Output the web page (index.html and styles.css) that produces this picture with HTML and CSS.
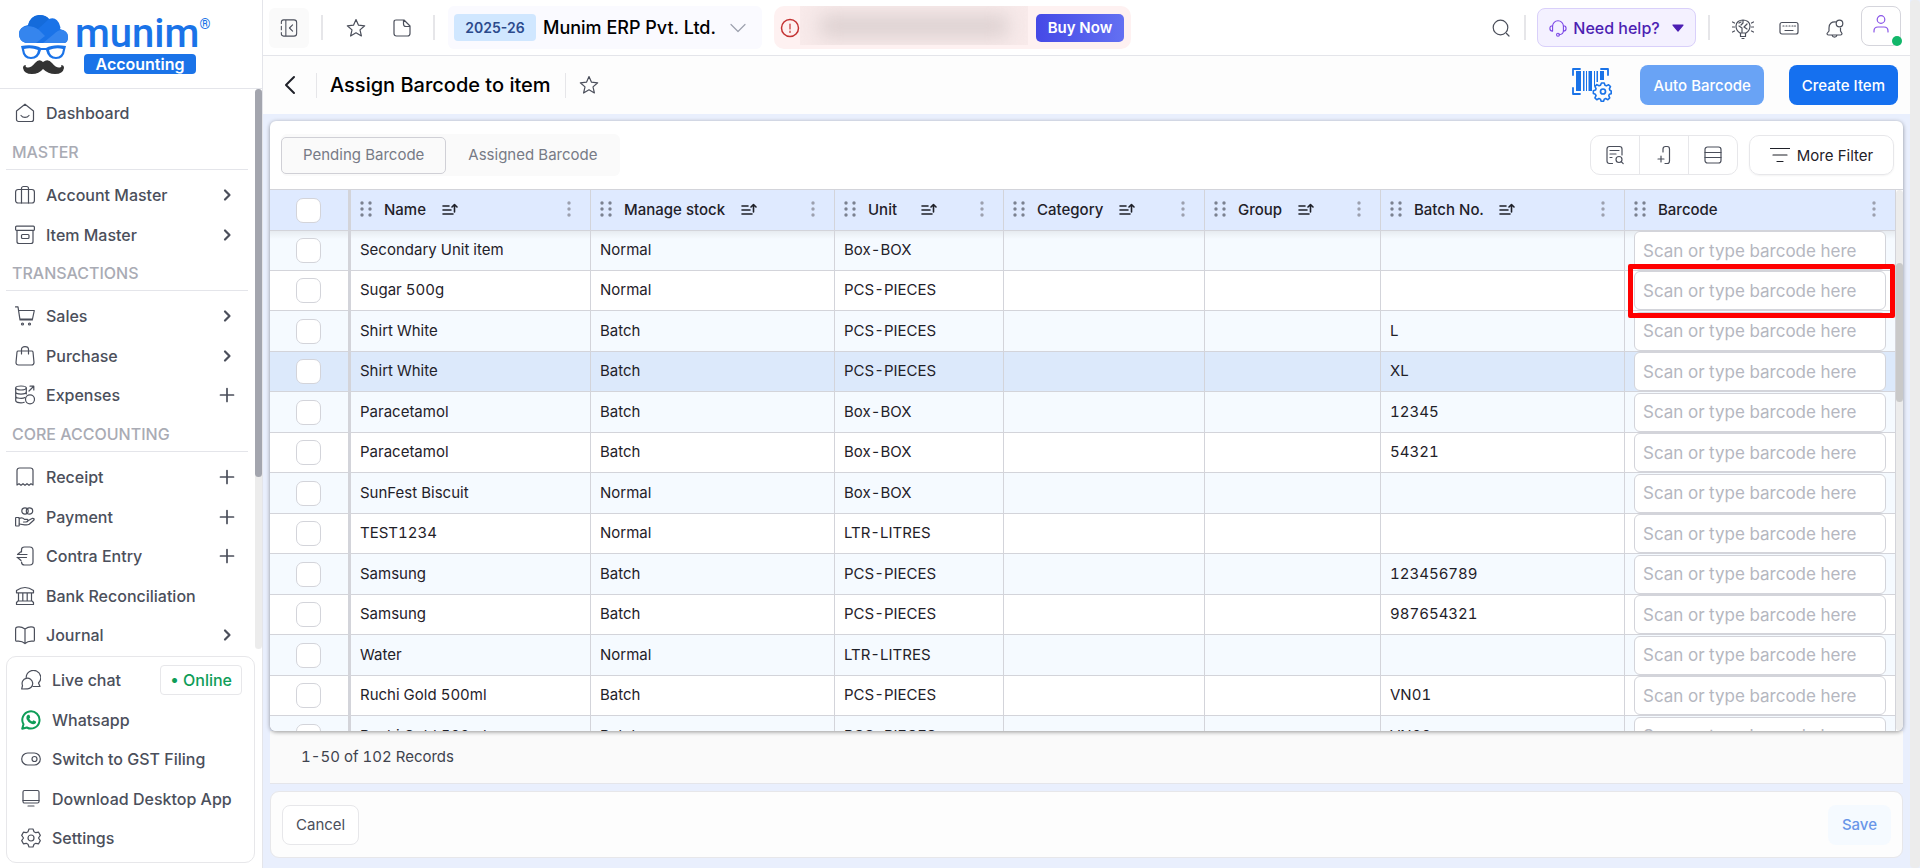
FILE: index.html
```html
<!DOCTYPE html>
<html lang="en">
<head>
    <meta charset="UTF-8">
    <meta name="viewport" content="width=device-width, initial-scale=1.0">
    <title>Assign Barcode to item</title>
    <link rel="stylesheet" href="styles.css">
</head>
<body>
    <!-- shared icons -->
    <svg class="sprite" aria-hidden="true">
        <symbol id="i-chevron" viewBox="0 0 20 20"><path d="M8 5.500l4.500 4.500L8 14.500" stroke-width="2.200"/></symbol>
        <symbol id="i-plus" viewBox="0 0 20 20"><path d="M10 3.500v13M3.500 10h13" stroke-width="1.700"/></symbol>
        <symbol id="i-star" viewBox="0 0 20 20"><path d="M10 1.500l2.500 5.700 6.200.6-4.700 4.100 1.400 6.100L10 14.800 4.600 18 6 11.900 1.300 7.800l6.200-.6z"/></symbol>
        <symbol id="i-drag" viewBox="0 0 12 16"><g fill="#7b8190" stroke="none"><circle cx="2" cy="2" r="1.700"/><circle cx="10" cy="2" r="1.700"/><circle cx="2" cy="8" r="1.700"/><circle cx="10" cy="8" r="1.700"/><circle cx="2" cy="14" r="1.700"/><circle cx="10" cy="14" r="1.700"/></g></symbol>
        <symbol id="i-sort" viewBox="0 0 16 14"><path d="M1 4h6M1 8h8M1 12h10" stroke-width="1.600"/><path d="M12.500 10V3M10 5l2.500-2.500L15 5" stroke-width="1.600"/></symbol>
        <symbol id="i-dots" viewBox="0 0 4 16"><g fill="#9ca0ae" stroke="none"><circle cx="2" cy="2" r="1.700"/><circle cx="2" cy="8" r="1.700"/><circle cx="2" cy="14" r="1.700"/></g></symbol>
    </svg>

    <aside class="sidebar">
        <a class="logo" href="#" aria-label="munim Accounting">
            <svg class="logo-mark" width="52" height="60" viewBox="0 0 52 60">
                <path d="M8 28Q1 26 1 19q0-7 9-9Q12 1 21 0q7 0 10 4 8-3 11 7 1 2 0 3 8 2 8 8t-4 6z" fill="#1a73e8"/>
                <path d="M8 28Q1 26 1 19q0-7 9-8 6 0 11 4l6 6-9 7z" fill="#3585ee"/>
                <path d="M25 28l11-9q6-6 11-3 3 2 3 6 0 4-4 6z" fill="#3585ee"/>
                <path d="M10 11Q12 1 21 0q7 0 10 4L20 14q-4-3-10-3z" fill="#146bdb"/>
                <path d="M3 31q13-2 20 2h5q7-4 20-2l-1 4q-1 9-9 9-8 0-10-9h-5q-2 9-10 9-8 0-9-9z" fill="#1a73e8"/>
                <path d="M6 34q7-2 14 1-1 7-7 7-6 0-7-8zM45 34q-7-2-14 1 1 7 7 7 6 0 7-8z" fill="#fff"/>
                <path d="M25 47q-4-4-8 1-5 6-9 4-1-1 0-2-3 0-3 3 1 6 9 6 7 0 11-5 5 5 12 5 8 0 9-6 0-3-3-3 1 1 0 2-4 2-9-4-4-5-9-1z" fill="#333"/>
            </svg>
            <span class="logo-text">
                <span class="logo-name">munim<sup>®</sup></span>
                <span class="logo-product">Accounting</span>
            </span>
        </a>

        <div class="menu-scroll">
            <nav class="menu">
                <ul>
                    <li><a href="#">
                        <svg class="icon" viewBox="0 0 20 20"><path d="M1.500 8L10 1.200 18.500 8v8.500a2 2 0 0 1-2 2h-13a2 2 0 0 1-2-2zM6 12.500c2 2.600 6 2.600 8 0"/></svg>
                        <span>Dashboard</span></a></li>
                </ul>
                <h2>MASTER</h2>
                <ul>
                    <li><a href="#">
                        <svg class="icon" viewBox="0 0 20 20"><rect x=".600" y="4.500" width="18.800" height="13.500" rx="2.500"/><path d="M6.500 18V3.500a2 2 0 0 1 2-2h3a2 2 0 0 1 2 2V18"/></svg>
                        <span>Account Master</span><svg class="arrow"><use href="#i-chevron"/></svg></a></li>
                    <li><a href="#">
                        <svg class="icon" viewBox="0 0 20 20"><rect x=".600" y="1.200" width="18.800" height="4.200" rx="1"/><path d="M2 5.500v11a2 2 0 0 0 2 2h12a2 2 0 0 0 2-2v-11"/><rect x="6.500" y="9.500" width="7.500" height="4" rx="1"/></svg>
                        <span>Item Master</span><svg class="arrow"><use href="#i-chevron"/></svg></a></li>
                </ul>
                <h2>TRANSACTIONS</h2>
                <ul>
                    <li><a href="#">
                        <svg class="icon" viewBox="0 0 20 20"><path d="M.500.800H3l2 13h12.500M3.500 4.500h15.800l-1.800 8.500H5"/><circle cx="7.500" cy="18" r="1"/><circle cx="14.500" cy="18" r="1"/></svg>
                        <span>Sales</span><svg class="arrow"><use href="#i-chevron"/></svg></a></li>
                    <li><a href="#">
                        <svg class="icon" viewBox="0 0 20 20"><path d="M3.200 5h13.600q1 0 1.200 1l1 10.500q0 2.500-2.500 2.500h-13Q1 19 1 16.500L2 6q.2-1 1.200-1zM6.500 8V3.500Q6.500.700 10 .700t3.500 2.800V8"/></svg>
                        <span>Purchase</span><svg class="arrow"><use href="#i-chevron"/></svg></a></li>
                    <li><a href="#">
                        <svg class="icon" viewBox="0 0 20 20"><ellipse cx="6" cy="3" rx="5.300" ry="2"/><path d="M.700 3v12.500c0 2.500 6 2.800 8.500 1.800M11.300 3v6M.700 7c0 2.700 10.600 2.700 10.600 0M.700 11.200c0 2.300 7 2.700 9.300 1.300"/><circle cx="15" cy="14.300" r="4.500"/><path d="M14 6l4.500-4.500M15 1.200h3.800V5"/></svg>
                        <span>Expenses</span><svg class="arrow"><use href="#i-plus"/></svg></a></li>
                </ul>
                <h2>CORE ACCOUNTING</h2>
                <ul>
                    <li><a href="#">
                        <svg class="icon" viewBox="0 0 20 20"><path d="M2 18V3.500a2.500 2.500 0 0 1 2.500-2.500h11A2.500 2.500 0 0 1 18 3.500V18l-2-1.300-2 1.600-2-1.600-2 1.600-2-1.600-2 1.600-2-1.600z"/></svg>
                        <span>Receipt</span><svg class="arrow"><use href="#i-plus"/></svg></a></li>
                    <li><a href="#">
                        <svg class="icon" viewBox="0 0 20 20"><circle cx="10" cy="4" r="3.200"/><circle cx="14.500" cy="4" r="3.200"/><rect x=".600" y="10.500" width="3.600" height="8.500" rx=".500"/><path d="M4.200 11.500q3-1.500 5.300.8h3q1.500 2.300-1.500 2.700H8.500M12.500 14l5-2.700q2.500.2 1.200 2l-4.500 4q-2 1-4.500.5l-5.500-.8"/></svg>
                        <span>Payment</span><svg class="arrow"><use href="#i-plus"/></svg></a></li>
                    <li><a href="#">
                        <svg class="icon" viewBox="0 0 20 20"><path d="M6.500 6V3.800Q6.500 1 9.500 1h5.300Q18 1 18 4.200v11.600q0 3.200-3.200 3.200H9.500q-3 0-3-3M12 8.500H2.500L5.500 6M2 11.500h9.500M2.500 11.500l3.500 3"/></svg>
                        <span>Contra Entry</span><svg class="arrow"><use href="#i-plus"/></svg></a></li>
                    <li><a href="#">
                        <svg class="icon" viewBox="0 0 20 20"><path d="M1.500 6.800V4.500Q10-1.500 18.500 4.500v2.300zM3.500 7v8M7.800 7v8M12.200 7v8M16.500 7v8M3 15h14l1.500 1.500v2h-17v-2z"/></svg>
                        <span>Bank Reconciliation</span></a></li>
                    <li><a href="#">
                        <svg class="icon" viewBox="0 0 20 20"><path d="M10 4Q6 1.300 2 2.200q-1.400.3-1.400 1.800v11q0 1.400 1.400 1.200 5-.5 8 2.300 3-2.800 8-2.300 1.400.2 1.400-1.200V4q0-1.500-1.400-1.800Q14 1.300 10 4v14.500"/></svg>
                        <span>Journal</span><svg class="arrow"><use href="#i-chevron"/></svg></a></li>
                </ul>
            </nav>
            <div class="scrollbar"><div class="thumb menu-thumb"></div></div>
        </div>

        <ul class="support">
            <li><a href="#">
                <svg class="icon" viewBox="0 0 20 20"><path d="M5.200 7.500A7.300 7.300 0 1 1 17.500 13l1.500 3.500h-7"/><path d="M.700 19l.8-3.500a5.300 5.300 0 1 1 4.500 3.300z"/></svg>
                <span>Live chat</span></a><span class="online">• Online</span></li>
            <li><a href="#">
                <svg class="icon" viewBox="0 0 20 20"><path d="M1.200 18.800l1.300-4.500a8.600 8.600 0 1 1 3.300 3.200z" stroke="#0f9d58" stroke-width="2"/><path d="M6.500 5q2-1 2.300 1l.4 1.500-1 1.300q1 2 3 2.800l1.300-1.300 2.400 1.100q.6.800-.5 2.200-2 1.400-4.600 0Q6.800 12 5.500 9q-.6-2.500 1-4z" fill="#0f9d58" stroke="none"/></svg>
                <span>Whatsapp</span></a></li>
            <li><a href="#">
                <svg class="icon" viewBox="0 0 20 20"><rect x=".700" y="4" width="18.600" height="12" rx="6"/><circle cx="13.500" cy="10" r="2.500"/></svg>
                <span>Switch to GST Filing</span></a></li>
            <li><a href="#">
                <svg class="icon" viewBox="0 0 20 20"><rect x="2" y="1.500" width="16" height="12.500" rx="1.500"/><path d="M2 11.500h16M7 17h6"/></svg>
                <span>Download Desktop App</span></a></li>
            <li><a href="#">
                <svg class="icon" viewBox="0 0 20 20"><path d="M8 1h4l1 2.700 1.800 1 2.800-.5 1.700 3.200L17.500 10l1.800 2.600-1.700 3.200-2.800-.5-1.800 1L12 19H8l-1-2.700-1.800-1-2.800.5L.700 12.600 2.500 10 .700 7.400l1.700-3.200 2.800.5 1.800-1z"/><circle cx="10" cy="10" r="3"/></svg>
                <span>Settings</span></a></li>
        </ul>
    </aside>

    <div class="page">
        <header class="topbar">
            <button class="icon-btn collapse" aria-label="Collapse menu">
                <svg width="18" height="18" viewBox="0 0 20 20"><path d="M6 1H4Q1.500 1 1.500 3.500V5M1.500 8v4M1.500 15v1.500Q1.500 19 4 19h2M6.500 1h9Q18.500 1 18.500 4v12q0 3-3 3h-9zM14 6.500L10.500 10l3.500 3.500"/></svg>
            </button>
            <span class="divider"></span>
            <button class="icon-btn" aria-label="Favourites"><svg width="20" height="20"><use href="#i-star"/></svg></button>
            <button class="icon-btn" aria-label="Documents"><svg width="20" height="20" viewBox="0 0 20 20"><path d="M4 2h8l6 6v7.500q0 2.500-2.500 2.500h-11Q2 18 2 15.500V4q0-2 2-2zM11.500 2v4q0 2.500 2.500 2.500h4"/></svg></button>
            <span class="divider company-divider"></span>
            <button class="company">
                <span class="year">2025-26</span>
                <span>Munim ERP Pvt. Ltd.</span>
                <svg width="16" height="16" viewBox="0 0 16 16"><path d="M1 4.500l7 7 7-7"/></svg>
            </button>
            <div class="notice">
                <svg width="20" height="20" viewBox="0 0 20 20"><circle cx="10" cy="10" r="8.500" stroke-width="1.500"/><path d="M10 6v5M10 13v1.500"/></svg>
                <span class="notice-text"></span>
                <button class="buy">Buy Now</button>
            </div>
            <span class="spacer"></span>
            <button class="icon-btn" aria-label="Search"><svg width="20" height="20" viewBox="0 0 20 20"><circle cx="9.500" cy="9.500" r="7.300"/><path d="M15.500 15.500L18 18"/></svg></button>
            <span class="divider"></span>
            <button class="help">
                <svg width="18" height="18" viewBox="0 0 20 20"><path d="M4 13V8a6 6 0 0 1 12 0v5q0 4-5 4.500M4 7.500q-3 0-3 3T4 13.500M16 7.500q3 0 3 3t-3 3"/><circle cx="10" cy="17.500" r="1.600"/></svg>
                <span>Need help?</span>
                <svg width="12" height="8" viewBox="0 0 12 8"><path d="M1 1h10L6 7z" fill="#4c1fb3" stroke="#4c1fb3"/></svg>
            </button>
            <span class="divider"></span>
            <button class="icon-btn" aria-label="Tips"><svg width="22" height="22" viewBox="0 0 22 22"><path d="M8 16c-3-2-4-4-4-7 0-8 14-8 14 0 0 3-1 5-4 7zM8.500 16v3.500h5V16M10 21.500h2M11 3v3l-2 2M7 9l3 2v4M15 7l-3 3 3 2M7 6l2-1M.500 5l2 1M.500 10h2M.500 15l2-1M21.500 5l-2 1M21.500 10h-2M21.500 15l-2-1"/></svg></button>
            <button class="icon-btn" aria-label="Shortcuts"><svg width="20" height="20" viewBox="0 0 20 20"><rect x="1" y="4.500" width="18" height="11.500" rx="2"/><path d="M4 8h1M7 8h1M10 8h1M13 8h1M15.500 8h1M6 12.500h8"/></svg></button>
            <button class="icon-btn" aria-label="Notifications"><svg width="20" height="20" viewBox="0 0 20 20"><path d="M11 4Q4 3.500 4 10v3l-2 2.500Q2 17 3.500 17h12q1.500 0 1.500-1.500L15.500 13v-3M7 17.200q.5 2 2.500 2t2.500-2"/><circle cx="14.500" cy="5.500" r="3.300"/></svg></button>
            <button class="profile" aria-label="Profile"><svg width="20" height="20" viewBox="0 0 20 20"><circle cx="10" cy="5.500" r="3.800"/><path d="M3 18v-1q0-4 4-4h6q4 0 4 4v1"/></svg></button>
        </header>

        <div class="titlebar">
            <button class="icon-btn back" aria-label="Back"><svg width="20" height="20" viewBox="0 0 20 20"><path d="M14 2l-8 8 8 8"/></svg></button>
            <span class="divider"></span>
            <h1>Assign Barcode to item</h1>
            <span class="divider"></span>
            <button class="icon-btn" aria-label="Add to favourites"><svg width="20" height="20"><use href="#i-star"/></svg></button>
            <span class="spacer"></span>
            <button class="icon-btn barcode-settings" aria-label="Barcode settings">
                <svg width="40" height="34" viewBox="0 0 40 34"><path d="M1 7V1h7M29 1h7v6M1 20v6h7" stroke-width="1.800"/><path d="M4 3h5v20H4zM11 3h1.500v20H11zM14 3h1v20h-1zM16.500 3H20v20h-3.500zM22 3h1v15h-1zM24.500 3H26v11h-1.500zM28 3h4v9h-4z" fill="#1a73e8" stroke="none"/><path d="M29.500 15h3l.8 2.500 1.500.6 2.400-1.200 2 2-1.200 2.400.6 1.500 1.400.7v3l-2 .7-.6 1.500 1 2.300-2 2-2.300-1.200-1.600.7-.7 2.200h-2.600l-.8-2.300-1.600-.6-2.300 1.200-2-2 1.200-2.300-.7-1.500-2.200-.8v-3l2.300-.7.6-1.500-1.200-2.400 2-2 2.400 1.200 1.600-.6z" transform="translate(2 1) scale(.93)" stroke-width="1.700"/><circle cx="31" cy="23.500" r="2.500" stroke-width="1.700"/></svg>
            </button>
            <button class="btn btn-primary" disabled>Auto Barcode</button>
            <button class="btn btn-primary">Create Item</button>
        </div>

        <main>
            <section class="card">
                <div class="toolbar">
                    <div class="tabs" role="tablist">
                        <button class="tab active" role="tab" aria-selected="true">Pending Barcode</button>
                        <button class="tab" role="tab" aria-selected="false">Assigned Barcode</button>
                    </div>
                    <span class="spacer"></span>
                    <div class="tools">
                        <button aria-label="Preview"><svg width="20" height="20" viewBox="0 0 20 20"><path d="M7.500 18.500h-3Q2 18.500 2 16V4q0-2.500 2.500-2.500h10Q17 1.500 17 4v6M5 5.500h9M5 9h6M5 12.500h2"/><circle cx="14" cy="14.500" r="3"/><path d="M16.200 16.700l2 2"/></svg></button>
                        <button aria-label="Add column"><svg width="20" height="20" viewBox="0 0 20 20"><path d="M9 7V4q0-2.500 2.500-2.500h1.800q2.200 0 2.200 2.500v12q0 2.500-2.200 2.500H11M7 11v6M4 14h6"/></svg></button>
                        <button aria-label="Row density"><svg width="20" height="20" viewBox="0 0 20 20"><rect x="2" y="2" width="16" height="16" rx="2.500"/><path d="M2 7.500h16M2 12.500h16"/></svg></button>
                    </div>
                    <button class="more-filter"><svg width="20" height="20" viewBox="0 0 20 20"><path d="M0 3.500h20M3 10h14M7 16.500h6"/></svg>More Filter</button>
                </div>
                <div class="table-area">
                    <div class="table-clip">
                        <table>
                            <colgroup>
                                <col class="c-check"><col class="c-name"><col class="c-stock"><col class="c-unit"><col class="c-category"><col class="c-group"><col class="c-batch"><col>
                            </colgroup>
                            <thead><tr id="head"></tr></thead>
                            <tbody id="rows"></tbody>
                        </table>
                    </div>
                    <div class="scrollbar"><div class="thumb table-thumb"></div></div>
                </div>
            </section>
            <div class="records">1-50 of 102 Records</div>
            <footer class="actions">
                <button class="btn btn-cancel">Cancel</button>
                <button class="btn btn-save" disabled>Save</button>
            </footer>
        </main>
    </div>
    <div class="scrollbar page-scrollbar"></div>

    <script>
        const columns = ['Name', 'Manage stock', 'Unit', 'Category', 'Group', 'Batch No.', 'Barcode'];

        // name, manage stock, unit, batch no.
        const items = [
            ['Secondary Unit item', 'Normal', 'Box-BOX', ''],
            ['Sugar 500g', 'Normal', 'PCS-PIECES', ''],
            ['Shirt White', 'Batch', 'PCS-PIECES', 'L'],
            ['Shirt White', 'Batch', 'PCS-PIECES', 'XL'],
            ['Paracetamol', 'Batch', 'Box-BOX', '12345'],
            ['Paracetamol', 'Batch', 'Box-BOX', '54321'],
            ['SunFest Biscuit', 'Normal', 'Box-BOX', ''],
            ['TEST1234', 'Normal', 'LTR-LITRES', ''],
            ['Samsung', 'Batch', 'PCS-PIECES', '123456789'],
            ['Samsung', 'Batch', 'PCS-PIECES', '987654321'],
            ['Water', 'Normal', 'LTR-LITRES', ''],
            ['Ruchi Gold 500ml', 'Batch', 'PCS-PIECES', 'VN01'],
            ['Ruchi Gold 500ml', 'Batch', 'PCS-PIECES', 'VN02']
        ];
        const hoverRow = 3;
        const focusRow = 1;

        document.getElementById('head').innerHTML =
            '<th class="check"><input type="checkbox" aria-label="Select all"></th>' +
            columns.map(name => `
                <th><div class="th">
                    <svg width="12" height="16"><use href="#i-drag"/></svg>
                    <span>${name}</span>
                    ${name === 'Barcode' ? '' : '<svg class="sort" width="16" height="14"><use href="#i-sort"/></svg>'}
                    <svg class="dots" width="4" height="16"><use href="#i-dots"/></svg>
                </div></th>`).join('');

        document.getElementById('rows').innerHTML = items.map(([name, stock, unit, batch], i) => `
            <tr class="${i === hoverRow ? 'hovered' : ''}">
                <td class="check"><input type="checkbox" aria-label="Select ${name}"></td>
                <td>${name}</td>
                <td>${stock}</td>
                <td>${unit}</td>
                <td></td>
                <td></td>
                <td>${batch}</td>
                <td class="barcode ${i === focusRow ? 'marked' : ''}"><input type="text" aria-label="Barcode for ${name}" placeholder="Scan or type barcode here"></td>
            </tr>`).join('');
    </script>
</body>
</html>
```
FILE: styles.css
```css
* {
    box-sizing: border-box;
}
body {
    font-family: Inter, "Liberation Sans", sans-serif;
    margin: 0;
    display: flex;
    height: 100vh;
    overflow: hidden;
    font-size: 15px;
    color: #1f2129;
    background-color: #e9effd;
}
button, input {
    font: inherit;
    color: inherit;
}
button {
    padding: 0;
    border: none;
    background: none;
    cursor: pointer;
}
svg {
    flex: none;
    fill: none;
    stroke: currentColor;
    stroke-width: 1.2;
    stroke-linecap: round;
    stroke-linejoin: round;
}
ul {
    list-style-type: none;
    margin: 0;
    padding: 0;
}
a {
    color: inherit;
    text-decoration: none;
}
.sprite {
    display: none;
}
.spacer {
    flex: 1;
}
.divider {
    flex: none;
    width: 2px;
    height: 25px;
    background-color: #e6e6e9;
}
.scrollbar {
    flex: none;
    width: 7px;
    background-color: #ececec;
    border-radius: 4px;
}
.thumb {
    border-radius: 4px;
}

/* Sidebar */
.sidebar {
    flex: none;
    width: 263px;
    display: flex;
    flex-direction: column;
    background-color: #fff;
    border-right: 1px solid #e4e5ea;
}
.logo {
    display: flex;
    gap: 5px;
    height: 89px;
    padding: 15px 0 0 18px;
    border-bottom: 1px solid #e4e5ea;
}
.logo-mark {
    stroke: none;
}
.logo-text {
    display: flex;
    flex-direction: column;
    color: #1a73e8;
}
.logo-name {
    font-family: Roboto, sans-serif;
    font-size: 40px;
    font-weight: 500;
    line-height: 38px;
}
.logo-name sup {
    font-size: 14px;
    line-height: 0;
    vertical-align: 18px;
}
.logo-product {
    width: 112px;
    margin: 1px 0 0 9px;
    border-radius: 4px;
    background-color: #1a73e8;
    color: #fff;
    font-size: 16px;
    font-weight: 600;
    line-height: 20px;
    text-align: center;
}
.menu-scroll {
    flex: 1;
    display: flex;
    min-height: 0;
    margin-bottom: 7px;
    overflow: hidden;
}
.menu {
    flex: 1;
    padding: 4px 7px 0 6px;
}
.menu li, .support li {
    display: flex;
    align-items: center;
    height: 40px;
}
.menu li:nth-child(even), .support li:nth-child(even) {
    height: 39px;
}
.menu a, .support a {
    flex: 1;
    display: flex;
    align-items: center;
    gap: 11px;
    padding: 0 11px 0 9px;
    color: #4b4f5b;
    font-size: 16px;
    font-weight: 500;
    white-space: nowrap;
}
.icon, .arrow {
    width: 20px;
    height: 20px;
}
.arrow {
    margin-left: auto;
}
.menu h2 {
    height: 37px;
    margin: 0 0 5px;
    padding-left: 6px;
    border-bottom: 1px solid #e4e5ea;
    color: #a9abb4;
    font-size: 16px;
    font-weight: 500;
    line-height: 38px;
}
.menu-thumb {
    height: 388px;
    background-color: #a3a5ae;
}
.support {
    margin: 0 7px 5px 6px;
    padding: 3px 0 4px;
    border: 1px solid #e7e7ea;
    border-radius: 10px;
}
.support a {
    padding: 0 0 0 14px;
}
.online {
    margin-right: 12px;
    padding: 0 9px;
    border: 1px solid #e7e7ea;
    border-radius: 4px;
    color: #0f9d58;
    font-size: 16px;
    font-weight: 500;
    line-height: 28px;
}

/* Header */
.page {
    flex: 1;
    min-width: 0;
    display: flex;
    flex-direction: column;
}
.topbar {
    display: flex;
    align-items: center;
    height: 56px;
    padding: 0 8px 0 6px;
    background-color: #fff;
    border-bottom: 1px solid #e4e5ea;
}
.icon-btn {
    display: flex;
    align-items: center;
    justify-content: center;
    width: 46px;
    height: 40px;
    color: #4b4f5b;
}
.collapse {
    width: 40px;
    margin-right: 12px;
    border-radius: 6px;
    background-color: #fafafa;
}
.topbar .divider + .icon-btn {
    margin-left: 10px;
}
.company-divider {
    margin-left: 8px;
}
.company {
    display: flex;
    align-items: center;
    gap: 7px;
    height: 43px;
    margin-left: 13px;
    padding: 0 16px 0 6px;
    border-radius: 6px;
    background-color: #fafaff;
    color: #000;
    font-size: 18px;
    font-weight: 500;
}
.company svg {
    margin-left: 7px;
    color: #9ca0ae;
}
.year {
    width: 82px;
    border-radius: 4px;
    background-color: #d0e7ff;
    color: #2b4a8c;
    font-size: 14px;
    font-weight: 600;
    line-height: 27px;
}
.notice {
    display: flex;
    align-items: center;
    height: 43px;
    margin-left: 12px;
    padding: 0 7px 0 6px;
    border-radius: 10px;
    background-color: #fef1f1;
    color: #c43434;
}
/* hidden message */
.notice-text {
    width: 228px;
    height: 39px;
    margin: 0 8px 4px 0;
    padding: 10px 20px;
    overflow: hidden;
    background-color: #f8eaea;
}
.notice-text::before {
    content: "";
    display: block;
    height: 20px;
    background-color: #d8cdcd;
    filter: blur(10px);
}
.buy {
    width: 88px;
    height: 28px;
    border-radius: 5px;
    background: linear-gradient(90deg, #4549e6, #6370f2);
    color: #fff;
    font-weight: 600;
}
.help {
    display: flex;
    align-items: center;
    justify-content: center;
    gap: 6px;
    width: 159px;
    height: 39px;
    margin: 0 12px 0 11px;
    border: 1px solid #d9d0fa;
    border-radius: 8px;
    background-color: #f4f1ff;
    color: #4c1fb3;
    font-size: 16px;
    font-weight: 500;
}
.help svg {
    color: #7a45e6;
}
.help svg:last-child {
    margin-left: 6px;
}
.profile {
    position: relative;
    width: 40px;
    height: 40px;
    margin: 0 1px 4px 3px;
    border: 1px solid #d5d5dc;
    border-radius: 8px;
    color: #8a55e8;
}
.profile::after {
    content: "";
    position: absolute;
    right: -2px;
    bottom: -1px;
    width: 10px;
    height: 10px;
    border-radius: 5px;
    background-color: #12b76a;
}

.titlebar {
    display: flex;
    align-items: center;
    height: 58px;
    padding: 0 12px 0 4px;
    background-color: #fdfdfd;
}
.titlebar .divider {
    width: 1px;
}
h1 {
    margin: 0 14px 0 13px;
    color: #000;
    font-size: 20px;
    font-weight: 500;
}
.back {
    margin-right: 3px;
    color: #1f2129;
}
.back svg {
    stroke-width: 2;
}
.barcode-settings {
    margin-right: 25px;
    color: #1a73e8;
}
.btn {
    height: 40px;
    border-radius: 8px;
    font-weight: 500;
}
.btn-primary {
    padding: 0 13px;
    background-color: #1570ef;
    color: #fff;
}
.btn-primary:disabled {
    margin-right: 25px;
    background-color: #69a3f5;
}

/* Card with table */
main {
    flex: 1;
    min-height: 0;
    display: flex;
    flex-direction: column;
    padding: 7px 7px 10px;
}
.card {
    flex: 1;
    min-height: 0;
    display: flex;
    flex-direction: column;
    overflow: hidden;
    border-radius: 6px;
    background-color: #fff;
    box-shadow: 0 1px 4px rgba(0,0,0,0.4);
    z-index: 1;
}
.toolbar {
    display: flex;
    align-items: center;
    height: 68px;
    padding: 0 9px 0 11px;
}
.tabs {
    display: flex;
    align-items: center;
    height: 42px;
    border-radius: 6px;
    background-color: #fafafa;
}
.tab {
    height: 37px;
    padding: 0 21px 1px;
    border: 1px solid transparent;
    border-radius: 5px;
    color: #777b86;
}
.tab.active {
    border-color: #d0d0d6;
}
.tools {
    display: flex;
    height: 40px;
    border: 1px solid #e7e7ea;
    border-radius: 10px;
}
.tools button {
    width: 48px;
    color: #4b4f5b;
}
.tools button + button {
    width: 49px;
    border-left: 1px solid #e7e7ea;
}
.tools svg {
    vertical-align: middle;
}
.more-filter {
    display: flex;
    align-items: center;
    justify-content: center;
    gap: 7px;
    width: 145px;
    height: 40px;
    margin-left: 11px;
    border: 1px solid #e7e7ea;
    border-radius: 10px;
    box-shadow: 0 1px 2px rgba(0,0,0,0.05);
}
.table-area {
    flex: 1;
    min-height: 0;
    display: flex;
    border-top: 1px solid #d3d4da;
}
.table-clip {
    flex: 1;
    overflow: hidden;
}
.table-area .scrollbar {
    padding-top: 73px;
}
.table-thumb {
    height: 139px;
    background-color: #c9c9c9;
}
table {
    width: 100%;
    table-layout: fixed;
    border-collapse: separate;
    border-spacing: 0;
    font-variant-numeric: tabular-nums;
}
.c-check {
    width: 81px;
}
.c-name {
    width: 240px;
}
.c-stock, .c-batch {
    width: 244px;
}
.c-unit {
    width: 169px;
}
.c-category {
    width: 201px;
}
.c-group {
    width: 176px;
}
th, td {
    padding: 0 9px 2px;
    border-right: 1px solid #d3d4da;
    border-bottom: 1px solid #d3d4da;
    text-align: left;
    white-space: nowrap;
}
th {
    height: 41px;
    background-color: #dfeaff;
    font-weight: 500;
}
td {
    height: 40px;
}
tr:nth-child(odd) td {
    height: 41px;
    background-color: #f5faff;
}
tbody tr:first-child td {
    height: 40px;
    background-image: linear-gradient(rgba(0,0,0,0.06), transparent 8px);
}
tr.hovered td {
    background-color: #dce9fb;
}
.th {
    display: flex;
    align-items: center;
}
.th span {
    min-width: 37px;
    margin: 0 16px 0 12px;
}
.dots {
    margin-left: auto;
    margin-right: 10px;
}
.check {
    padding: 0 2px 0 0;
    border-right-width: 3px;
    text-align: center;
}
input[type="checkbox"] {
    appearance: none;
    width: 25px;
    height: 25px;
    margin: 0;
    border: 1px solid #d3d4da;
    border-radius: 7px;
    background-color: #fff;
    vertical-align: middle;
}
td.barcode {
    padding-bottom: 0;
}
.barcode input {
    display: block;
    width: 100%;
    height: 39px;
    padding: 0 8px;
    border: 1px solid #d3d4da;
    border-radius: 6px;
    background-color: #fff;
    font-size: 17px;
}
.barcode input::placeholder {
    color: #b5b7c0;
}
.marked {
    position: relative;
}
.marked::after {
    content: "";
    position: absolute;
    top: -7px;
    right: 0;
    bottom: -8px;
    left: 3px;
    border: 5px solid #f00;
    border-radius: 2px;
}
.records {
    padding: 0 31px;
    background-color: #fafafa;
    color: #3f434e;
    font-variant-numeric: tabular-nums;
    line-height: 52px;
    border-bottom: 1px solid #e4e5ea;
}
.actions {
    display: flex;
    align-items: center;
    justify-content: space-between;
    height: 67px;
    margin-top: 7px;
    padding: 0 11px;
    border: 1px solid #e7e7ea;
    border-radius: 9px;
    background-color: #fdfdfd;
}
.btn-cancel {
    padding: 0 13px;
    border: 1px solid #e7e7ea;
    background-color: #fff;
    color: #4b4f5b;
    font-weight: 400;
}
.btn-save {
    padding: 0 14px;
    background-color: #f5faff;
    color: #6996e8;
}
.page-scrollbar {
    width: 10px;
}
```
